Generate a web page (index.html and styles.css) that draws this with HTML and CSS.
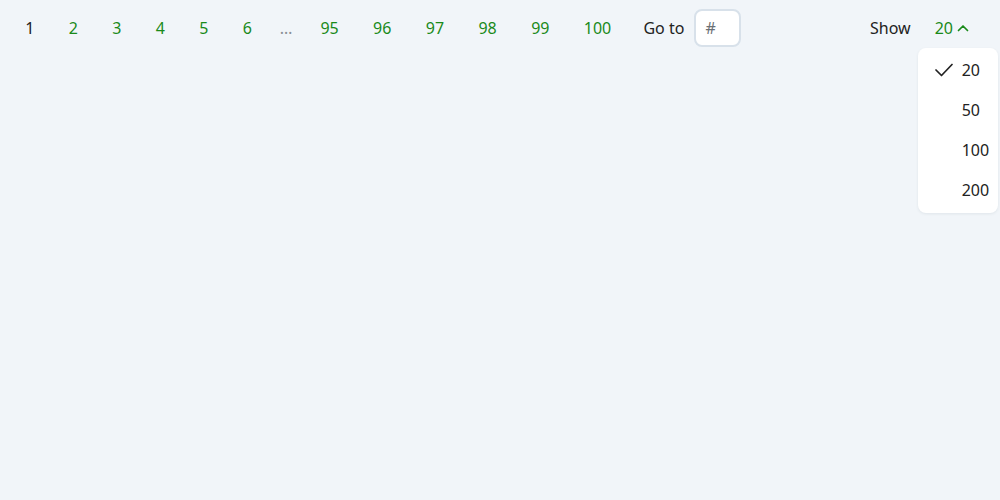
FILE: index.html
```html
<!DOCTYPE html>
<html>
<head>
<meta charset="utf-8">
<link rel="stylesheet" href="styles.css">
</head>
<body>
<nav class="pager">
  <div class="pages">
    <span class="page current">1</span>
    <a class="page">2</a>
    <a class="page">3</a>
    <a class="page">4</a>
    <a class="page">5</a>
    <a class="page">6</a>
    <span class="ellipsis">…</span>
    <a class="page">95</a>
    <a class="page">96</a>
    <a class="page">97</a>
    <a class="page">98</a>
    <a class="page">99</a>
    <a class="page">100</a>
  </div>
  <div class="goto">
    <span class="label">Go to</span>
    <input class="goto-input" type="text" placeholder="#">
  </div>
  <div class="show">
    <span class="label">Show</span>
    <div class="select">
      <div class="toggle">
        <span>20</span>
        <svg class="chev" width="12" height="8" viewBox="0 0 12 8"><path d="M1.5 6.5 L6 2 L10.5 6.5" fill="none" stroke="currentColor" stroke-width="1.7" stroke-linecap="round" stroke-linejoin="round"/></svg>
      </div>
      <div class="menu">
        <div class="opt selected"><svg class="check" width="18" height="14" viewBox="0 0 18 14"><path d="M1 7 L6.5 12.5 L17 1.5" fill="none" stroke="#222" stroke-width="1.7" stroke-linecap="round" stroke-linejoin="round"/></svg><span>20</span></div>
        <div class="opt"><span>50</span></div>
        <div class="opt"><span>100</span></div>
        <div class="opt"><span>200</span></div>
      </div>
    </div>
  </div>
</nav>
</body>
</html>
```
FILE: styles.css
```css
html, body {
  margin: 0;
  background: #f1f5f9;
}
body {
  padding: 8px 14px 0 8px;
  font-family: "Noto Sans", "Open Sans", sans-serif;
  font-size: 16px;
  color: #222;
  min-height: 480px;
}
.pager {
  display: flex;
  align-items: center;
  height: 40px;
}
.pages {
  display: flex;
  align-items: center;
  height: 40px;
}
.page {
  padding: 0 17.2px;
  color: #1a8a1a;
  line-height: 40px;
}
.page.current {
  color: #222;
}
.ellipsis {
  width: 34px;
  text-align: center;
  color: #8a8f95;
  line-height: 40px;
}
.goto {
  display: flex;
  align-items: center;
  gap: 10px;
  margin-left: 15px;
}
.label {
  color: #222;
}
.goto-input {
  box-sizing: border-box;
  width: 47px;
  height: 38px;
  border: 2px solid #d8e1ea;
  border-radius: 8px;
  background: #fff;
  padding: 0 9px;
  font-family: inherit;
  font-size: 16px;
  color: #222;
  outline: none;
}
.goto-input::placeholder {
  color: #6b7075;
}
.show {
  margin-left: auto;
  display: flex;
  align-items: center;
  gap: 7px;
}
.select {
  position: relative;
}
.toggle {
  display: flex;
  align-items: center;
  gap: 4px;
  height: 40px;
  padding: 0 17px;
  color: #1a8a1a;
}
.chev {
  display: block;
}
.menu {
  position: absolute;
  z-index: 10;
  left: 0;
  top: 40px;
  width: 80px;
  box-sizing: border-box;
  padding: 2px 0 3px;
  background: #ffffff;
  border-radius: 8px;
  box-shadow: 0 1px 3px rgba(30, 50, 70, 0.08);
}
.opt {
  display: flex;
  align-items: center;
  height: 40px;
  padding-left: 44px;
  position: relative;
  color: #222;
}
.check {
  position: absolute;
  left: 17px;
  top: 13px;
}
```
